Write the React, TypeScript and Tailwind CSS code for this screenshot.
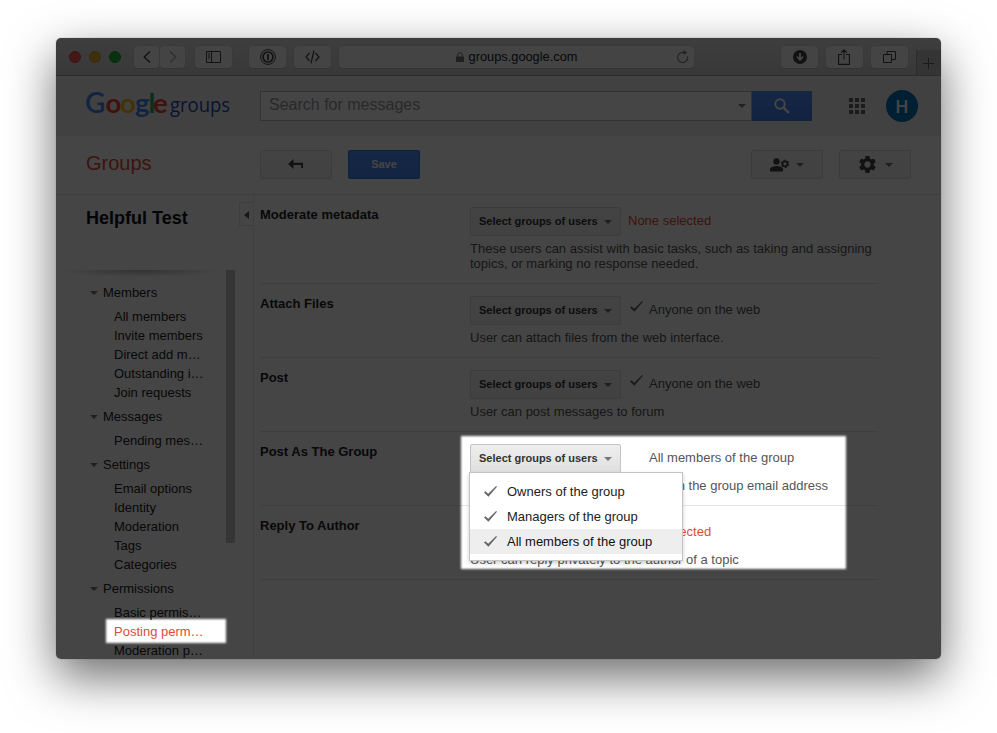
import type { ReactNode } from "react";
import { MdSettings } from "react-icons/md";

function Caret({ className = "" }: { className?: string }) {
  return (
    <svg className={className} width="8" height="4" viewBox="0 0 8 4">
      <path d="M0 0h8L4 4z" fill="#777" />
    </svg>
  );
}

function Check({ className = "" }: { className?: string }) {
  return (
    <svg className={className} width="13" height="11" viewBox="0 0 13 11">
      <path d="M0 6.500 1.400 5.200 4.200 7.800 12.100 0l.9.800L4.400 10.800z" fill="#666" />
    </svg>
  );
}

function ChromeButton({ className, children }: { className: string; children?: ReactNode }) {
  return (
    <div className={`flex h-[22px] shrink-0 items-center justify-center rounded bg-[#fbfbfb] shadow-[0_1px_0_#bcbcbc,0_0_0_0.5px_#ccc] ${className}`}>
      {children}
    </div>
  );
}

function TitleBar() {
  return (
    <div className="flex h-[38px] items-start border-b border-[#a0a0a0] bg-linear-to-b from-[#e4e4e4] to-[#d0d0d0] pt-2 pl-[13px]">
      <div className="mt-[5px] flex gap-2">
        <span className="size-3 rounded-full border border-[#e0443e] bg-[#fc5b57]" />
        <span className="size-3 rounded-full border border-[#dea123] bg-[#e5ac30]" />
        <span className="size-3 rounded-full border border-[#12ac28] bg-[#1fb83a]" />
      </div>
      <ChromeButton className="ml-[13px] w-[25px]">
        <svg width="8" height="12" viewBox="0 0 8 12" fill="none" stroke="#444" strokeWidth="1.4"><path d="M7 .5 1.2 6 7 11.5" /></svg>
      </ChromeButton>
      <ChromeButton className="ml-px w-[25px]">
        <svg width="8" height="12" viewBox="0 0 8 12" fill="none" stroke="#aaa" strokeWidth="1.3"><path d="M1 .5 6.8 6 1 11.5" /></svg>
      </ChromeButton>
      <ChromeButton className="ml-[10px] w-[37px]">
        <svg width="15" height="12" viewBox="0 0 15 12" fill="none" stroke="#444"><path d="M.5.5h14v11H.5zM5.5.5v11M2 3h2M2 5h2M2 7h2" /></svg>
      </ChromeButton>
      <ChromeButton className="ml-[17px] w-[37px]">
        <svg width="16" height="16" viewBox="0 0 16 16" fill="none" stroke="#444"><circle cx="8" cy="8" r="7.4" /><circle cx="8" cy="8" r="5" strokeWidth="1.7" /><path d="M8 5v6" strokeWidth="1.8" /></svg>
      </ChromeButton>
      <ChromeButton className="ml-2 w-[37px]">
        <svg width="15" height="14" viewBox="0 0 15 14" fill="none" stroke="#444" strokeWidth="1.200"><path d="M4.500 3 1 7l3.500 4M10.500 3 14 7l-3.500 4M9 .5 6 13.500" /></svg>
      </ChromeButton>
      <ChromeButton className="relative ml-2 w-[355px]">
        <svg className="mr-[5px]" width="8" height="10" viewBox="0 0 8 10"><path d="M0 4.500h8V10H0z" fill="#777" /><path d="M1.700 5V3a2.300 2.300 0 0 1 4.600 0v2" fill="none" stroke="#777" /></svg>
        <span className="text-[12.8px] leading-[22px] text-[#222]">groups.google.com</span>
        <svg className="absolute top-[4px] right-[5px]" width="13" height="14" viewBox="0 0 13 14" fill="none" stroke="#777" strokeWidth="1.100"><path d="M11.500 6.500A5 5 0 1 1 6.500 2.500h3" /><path d="m7.500 0 3.500 2.500L7.500 5z" fill="#777" stroke="none" /></svg>
      </ChromeButton>
      <ChromeButton className="ml-[87px] w-[37px]">
        <svg width="14" height="14" viewBox="0 0 14 14"><circle cx="7" cy="7" r="7" fill="#444" /><path d="M7 3v6M4 6.500l3 3.500 3-3.500" fill="none" stroke="#fff" strokeWidth="1.700" /></svg>
      </ChromeButton>
      <ChromeButton className="ml-2 w-[37px]">
        <svg className="-mt-px -ml-px" width="12" height="16" viewBox="0 0 12 16" fill="none" stroke="#444" strokeWidth="1.100"><path d="M4 5.500H.6v9.900h10.800V5.500H8M6 10.500V1M3.200 3.600 6 .8l2.800 2.800" /></svg>
      </ChromeButton>
      <ChromeButton className="ml-2 w-[37px]">
        <svg width="13" height="12" viewBox="0 0 13 12" fill="none" stroke="#444"><path d="M.5 3.500h8v8h-8zM4 3V.5h8.500v8H9" /></svg>
      </ChromeButton>
      <div className="mt-1 ml-2 flex h-[25px] w-[26px] items-center justify-center border-l border-[#aaa] bg-[#c0c0c0]">
        <svg className="mt-[2px] -ml-[2px]" width="11" height="11" viewBox="0 0 11 11" stroke="#666"><path d="M5.500 0v11M0 5.500h11" /></svg>
      </div>
    </div>
  );
}

function Header() {
  return (
    <div className="flex h-[60px] items-start bg-[#f1f1f1] pt-[15px] pl-[30px]">
      <svg className="-mt-[3px] w-[174px] shrink-0 overflow-visible" width="174" height="36" viewBox="0 0 174 36">
        <text y="24.500" className="font-['Lato'] text-[27.5px] font-bold">
          <tspan x="-1" fill="#4285f4" className="font-['Lato'] text-[28px] font-semibold">G</tspan>
          <tspan x="19.500" fill="#ea4335">o</tspan>
          <tspan x="34" fill="#fbbc05">o</tspan>
          <tspan x="49" fill="#4285f4">g</tspan>
          <tspan x="62.500" fill="#34a853">l</tspan>
          <tspan x="67" fill="#ea4335">e</tspan>
        </text>
        <text x="84" y="23.500" textLength="60" lengthAdjust="spacingAndGlyphs" fill="#1f45bc" className="font-['Open_Sans'] text-[20.5px]">groups</text>
      </svg>
      <div className="flex h-[30px] w-[492px] items-center justify-between border border-[#b9b9b9] bg-white pr-[5px] pl-2">
        <span className="-mt-[3px] text-base text-[#999]">Search for messages</span>
        <Caret />
      </div>
      <div className="flex h-[30px] w-[60px] items-center justify-center bg-linear-to-b from-[#4d90fe] to-[#4280e8]">
        <svg width="16" height="16" viewBox="0 0 16 16" fill="none" stroke="#fff"><circle cx="6" cy="6" r="4.700" strokeWidth="2" /><path d="m9.500 9.500 5.300 5.300" strokeWidth="2.400" /></svg>
      </div>
      <div className="mt-[7px] ml-[37px] grid grid-cols-3 gap-[2px]">
        {[0, 1, 2, 3, 4, 5, 6, 7, 8].map((i) => <span key={i} className="size-1 bg-[#666]" />)}
      </div>
      <div className="-mt-px ml-[21px] flex size-8 items-center justify-center rounded-full bg-[#0272b8] pt-px font-['Roboto'] text-[18px] font-medium text-white">H</div>
    </div>
  );
}

function ToolButton({ className = "", children }: { className?: string; children?: ReactNode }) {
  return (
    <div className={`flex h-[29px] w-[72px] items-center justify-center rounded-[2px] border border-[#dcdcdc] bg-linear-to-b from-[#f8f8f8] to-[#f1f1f1] ${className}`}>
      {children}
    </div>
  );
}

function Toolbar() {
  return (
    <div className="flex h-[59px] items-start border-b border-[#e5e5e5] pt-[14px] pl-[30px]">
      <div className="w-[174px] text-xl leading-[26px] text-[#dd4b39]">Groups</div>
      <ToolButton>
        <svg className="mb-[2px] -ml-px" width="15" height="10" viewBox="0 0 15 10"><path d="M0 5 5.500 0v3.800H15V9h-1.800V6H5.500v4z" fill="#444" /></svg>
      </ToolButton>
      <div className="ml-4 flex h-[29px] w-[72px] items-center justify-center rounded-[2px] border border-[#3079ed] bg-linear-to-b from-[#4d90fe] to-[#4787ed] text-[11px] font-bold text-white">Save</div>
      <ToolButton className="ml-[331px]">
        <svg width="20" height="14" viewBox="0 0 20 14">
          <circle cx="6.500" cy="3.400" r="3.200" fill="#444" />
          <path d="M0 13.500v-2.200C0 9 4.200 8 6.500 8S13 9 13 11.300v2.200z" fill="#444" />
          <circle cx="15" cy="5.800" r="2.500" fill="none" stroke="#444" strokeWidth="1.800" />
          <circle cx="15" cy="5.800" r="3.600" fill="none" stroke="#444" strokeWidth="1.200" strokeDasharray="1.900 1.870" />
        </svg>
        <Caret className="ml-[6px]" />
      </ToolButton>
      <ToolButton className="ml-4">
        <MdSettings className="mr-[7px] size-[21px] text-[#444]" />
        <Caret />
      </ToolButton>
    </div>
  );
}

const menu = [
  { title: "Members", items: ["All members", "Invite members", "Direct add m…", "Outstanding i…", "Join requests"] },
  { title: "Messages", items: ["Pending mes…"] },
  { title: "Settings", items: ["Email options", "Identity", "Moderation", "Tags", "Categories"] },
  { title: "Permissions", items: ["Basic permis…", "Posting perm…", "Moderation p…"] },
];

function Sidebar() {
  return (
    <div className="w-[198px] shrink-0 border-r border-[#ebebeb]">
      <div className="flex h-[75px] items-start justify-between pt-[7px] pl-[30px]">
        <h1 className="pt-[3px] text-[18px] leading-[26px] font-bold text-[#111]">Helpful Test</h1>
        <div className="flex h-6 w-[14px] items-center justify-center border border-r-0 border-[#e5e5e5]">
          <svg className="mt-[2px]" width="5" height="8" viewBox="0 0 5 8"><path d="M5 0v8L0 4z" fill="#555" /></svg>
        </div>
      </div>
      <div className="flex items-start">
        <div className="w-[170px] bg-[radial-gradient(80px_7px_at_50%_0,#bbb,transparent)] bg-no-repeat pt-2">
          {menu.map((group) => (
            <div key={group.title} className="text-[13px] text-[#222]">
              <div className="flex h-[29px] items-center pl-[34px]">
                <Caret className="mr-[5px]" />
                {group.title}
              </div>
              {group.items.map((item) => (
                <div key={item} className={`h-[19px] pl-[58px] leading-[19px] whitespace-nowrap ${item === "Posting perm…" ? "text-[#dd4b39]" : ""}`}>{item}</div>
              ))}
            </div>
          ))}
        </div>
        <div className="h-[273px] w-[9px] bg-[#c4c4c4]" />
      </div>
    </div>
  );
}

const options = ["Owners of the group", "Managers of the group", "All members of the group"];

function Dropdown() {
  return (
    <div className="absolute top-[28px] -left-px z-10 h-[89px] w-[214px] border border-[#c4c4c4] bg-white pt-[6px] shadow-[0_2px_4px_rgba(0,0,0,0.2)]">
      {options.map((option, i) => (
        <div key={option} className={`flex h-[25px] items-center pl-[14px] text-[13px] ${i === 2 ? "bg-[#eee] text-[#111]" : "text-[#222]"}`}>
          <Check className="mr-[10px] mb-px" />
          {option}
        </div>
      ))}
    </div>
  );
}

interface SettingProps {
  label: string;
  status: string;
  checked?: boolean;
  open?: boolean;
  tall?: boolean;
  children: ReactNode;
}

function Setting({ label, status, checked, open, tall, children }: SettingProps) {
  const none = status === "None selected";
  return (
    <div className={`flex items-start border-b border-[#e5e5e5] pt-3 ${tall ? "h-[89px]" : "h-[74px]"}`}>
      <div className="w-[210px] text-[13px] leading-4 font-bold text-[#222]">{label}</div>
      <div className="w-[408px]">
        <div className="relative flex h-[29px] items-start">
          <div className={`flex h-[29px] w-[151px] items-center justify-between rounded-[2px] border pr-2 pl-2 text-[11px] font-bold ${open ? "border-[#c4c4c4] bg-linear-to-b from-[#eee] to-[#e0e0e0] text-[#333]" : "border-[#dcdcdc] bg-linear-to-b from-[#f7f7f7] to-[#f1f1f1] text-[#333]"}`}>
            Select groups of users
            <Caret />
          </div>
          {!none && (
            <div className="ml-[9px] w-[19px] pt-[5px]">{checked && <Check />}</div>
          )}
          <span className={`text-[13px] leading-7 ${none ? "ml-[7px] text-[#dd4b39]" : "text-[#555]"}`}>{status}</span>
          {open && <Dropdown />}
        </div>
        <div className="pt-[5px] text-[13px] leading-[15px] whitespace-nowrap text-[#555]">{children}</div>
      </div>
    </div>
  );
}

/* Dimming layer with soft-edged openings over the highlighted areas. */
function Spotlight() {
  return (
    <svg className="pointer-events-none absolute inset-0 z-20" width="885" height="621">
      <defs>
        <filter id="soft" x="-5%" y="-20%" width="110%" height="140%"><feGaussianBlur stdDeviation="1" /></filter>
        <mask id="openings" maskUnits="userSpaceOnUse" x="0" y="0" width="885" height="621">
          <rect width="885" height="621" fill="#fff" />
          <g filter="url(#soft)">
            <rect x="405" y="398" width="385" height="133" />
            <rect x="50" y="581" width="120" height="24" />
          </g>
        </mask>
      </defs>
      <rect width="885" height="621" fill="#000" fillOpacity="0.73" mask="url(#openings)" />
    </svg>
  );
}

export default function App() {
  return (
    <div className="h-[733px] w-[997px] overflow-hidden bg-white pt-[38px] pl-[56px] font-['Liberation_Sans',Arial,sans-serif]">
      <div className="relative h-[621px] w-[885px] overflow-hidden rounded-[5px] bg-white shadow-[0_18px_48px_rgba(0,0,0,0.58),0_0_1px_rgba(0,0,0,0.5)]">
        <TitleBar />
        <Header />
        <Toolbar />
        <div className="flex h-[464px] overflow-hidden">
          <Sidebar />
          <div className="ml-[6px] w-[618px]">
            <Setting label="Moderate metadata" status="None selected" tall>
              These users can assist with basic tasks, such as taking and assigning<br />topics, or marking no response needed.
            </Setting>
            <Setting label="Attach Files" status="Anyone on the web" checked>User can attach files from the web interface.</Setting>
            <Setting label="Post" status="Anyone on the web" checked>User can post messages to forum</Setting>
            <Setting label="Post As The Group" status="All members of the group" open>
              <div className="w-[358px] text-right">User can post messages with the group email address</div>
            </Setting>
            <Setting label="Reply To Author" status="None selected">User can reply privately to the author of a topic</Setting>
          </div>
        </div>
        <Spotlight />
      </div>
    </div>
  );
}
